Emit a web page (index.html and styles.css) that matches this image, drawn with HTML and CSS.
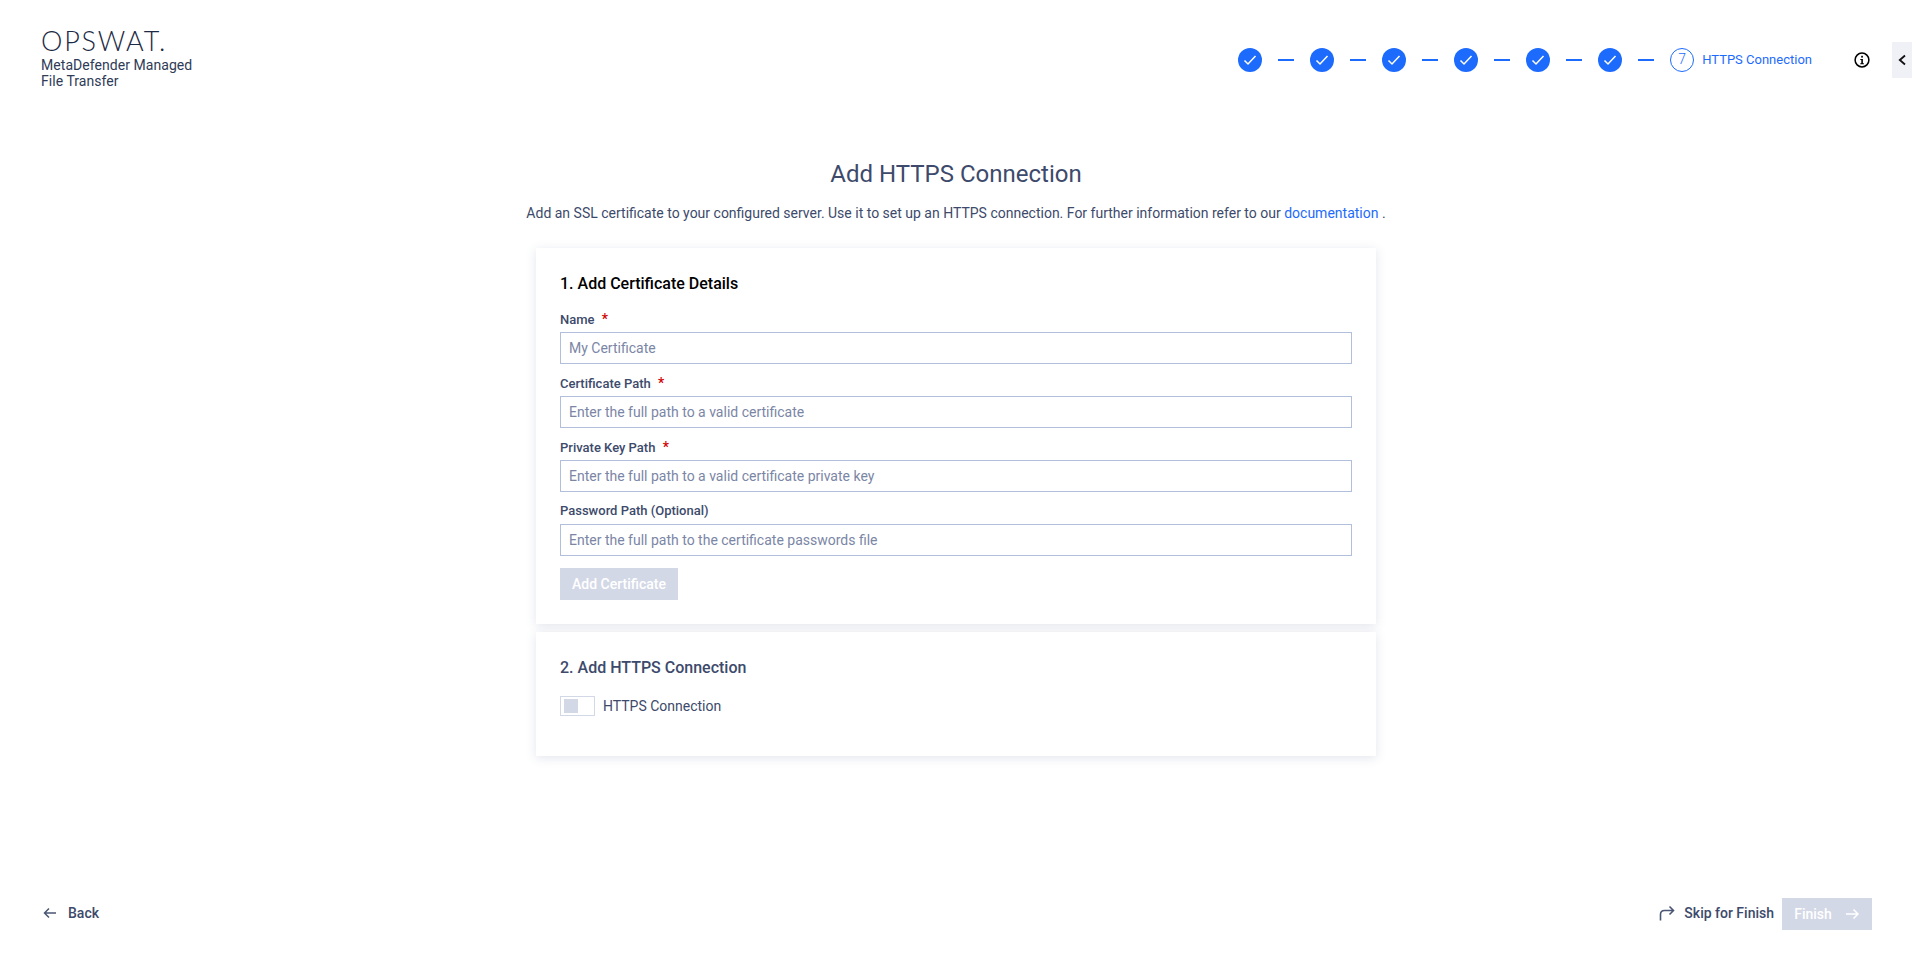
FILE: index.html
```html
<!DOCTYPE html>
<html lang="en">
<head>
    <meta charset="UTF-8">
    <title>MetaDefender Managed File Transfer</title>
    <link rel="stylesheet" href="styles.css">
</head>
<body>
    <div class="page">
        <header class="topbar">
            <div class="brand">
                <div class="brand-logo">OPSWAT.</div>
                <div class="brand-name">MetaDefender Managed<br>File Transfer</div>
            </div>
            <div class="top-right">
                <div class="stepper">
                    <span class="step-done"><svg viewBox="0 0 24 24" width="24" height="24"><path d="M6.500 12.500l3.500 3.500 7.500-8" fill="none" stroke="#fff" stroke-width="1.5"/></svg></span>
                    <span class="step-line"></span>
                    <span class="step-done"><svg viewBox="0 0 24 24" width="24" height="24"><path d="M6.500 12.500l3.500 3.500 7.500-8" fill="none" stroke="#fff" stroke-width="1.5"/></svg></span>
                    <span class="step-line"></span>
                    <span class="step-done"><svg viewBox="0 0 24 24" width="24" height="24"><path d="M6.500 12.500l3.500 3.500 7.500-8" fill="none" stroke="#fff" stroke-width="1.5"/></svg></span>
                    <span class="step-line"></span>
                    <span class="step-done"><svg viewBox="0 0 24 24" width="24" height="24"><path d="M6.500 12.500l3.500 3.500 7.500-8" fill="none" stroke="#fff" stroke-width="1.5"/></svg></span>
                    <span class="step-line"></span>
                    <span class="step-done"><svg viewBox="0 0 24 24" width="24" height="24"><path d="M6.500 12.500l3.500 3.500 7.500-8" fill="none" stroke="#fff" stroke-width="1.5"/></svg></span>
                    <span class="step-line"></span>
                    <span class="step-done"><svg viewBox="0 0 24 24" width="24" height="24"><path d="M6.500 12.500l3.500 3.500 7.500-8" fill="none" stroke="#fff" stroke-width="1.5"/></svg></span>
                    <span class="step-line"></span>
                    <span class="step-current">7</span>
                    <span class="step-label">HTTPS Connection</span>
                </div>
                <svg class="info-icon" viewBox="0 0 16 16" width="16" height="16">
                    <circle cx="8" cy="8" r="6.900" fill="none" stroke="#000" stroke-width="1.500"/>
                    <rect x="7.200" y="3.800" width="1.700" height="1.800" fill="#000"/>
                    <path d="M6.300 7h2.600v4.200h1v1.100H6.300v-1.100h1V8.100h-1z" fill="#000"/>
                </svg>
                <div class="collapse-tab">
                    <svg viewBox="0 0 20 36" width="20" height="36"><path d="M13 13.500L7.800 18l5.200 4.500" fill="none" stroke="#111" stroke-width="1.800"/></svg>
                </div>
            </div>
        </header>

        <main class="content">
            <h1>Add HTTPS Connection</h1>
            <p class="intro">Add an SSL certificate to your configured server. Use it to set up an HTTPS connection. For further information refer to our <a href="#">documentation</a> .</p>

            <section class="card">
                <h2 class="card-title-dark">1. Add Certificate Details</h2>
                <label class="field-label">Name <span class="req">*</span></label>
                <input class="field" type="text" placeholder="My Certificate">
                <label class="field-label">Certificate Path <span class="req">*</span></label>
                <input class="field" type="text" placeholder="Enter the full path to a valid certificate">
                <label class="field-label">Private Key Path <span class="req">*</span></label>
                <input class="field" type="text" placeholder="Enter the full path to a valid certificate private key">
                <label class="field-label">Password Path (Optional)</label>
                <input class="field" type="text" placeholder="Enter the full path to the certificate passwords file">
                <button class="btn-disabled add-btn" type="button">Add Certificate</button>
            </section>

            <section class="card card-second">
                <h2>2. Add HTTPS Connection</h2>
                <div class="toggle-row">
                    <span class="toggle"><span class="toggle-knob"></span></span>
                    <span class="toggle-text">HTTPS Connection</span>
                </div>
            </section>
        </main>

        <footer class="bottombar">
            <a class="nav-link" href="#">
                <svg viewBox="0 0 16 16" width="16" height="16"><path d="M14 8H2.500M7 3.500L2.500 8 7 12.500" fill="none" stroke="#4a5674" stroke-width="1.500"/></svg>
                <span class="back-text">Back</span>
            </a>
            <div class="bottom-right">
                <a class="nav-link" href="#">
                    <svg viewBox="0 0 16 16" width="16" height="16"><path d="M1.500 15.500V9.500C1.500 7 3 5.500 5.500 5.500H14.500M10.500 1.500l4 4-4 4" fill="none" stroke="#4a5674" stroke-width="1.600"/></svg>
                    <span class="skip-text">Skip for Finish</span>
                </a>
                <button class="btn-disabled finish-btn" type="button">Finish
                    <svg viewBox="0 0 16 16" width="16" height="16"><path d="M2 8h12M9.500 3.500L14 8l-4.500 4.500" fill="none" stroke="#fff" stroke-width="1.500"/></svg>
                </button>
            </div>
        </footer>
    </div>
</body>
</html>
```

FILE: styles.css
```css
body {
    margin: 0;
    font-family: 'Roboto', sans-serif;
    font-size: 14px;
    color: #3d4a6b;
    background-color: #ffffff;
}
.page {
    height: 962px;
    display: flex;
    flex-direction: column;
    overflow: hidden;
}

/* top bar */
.topbar {
    display: flex;
    justify-content: space-between;
    align-items: flex-start;
    height: 98px;
    padding-left: 41px;
    flex-shrink: 0;
}
.brand {
    padding-top: 27px;
}
.brand-logo {
    font-family: 'Lato', sans-serif;
    font-weight: 300;
    font-size: 27px;
    line-height: 28px;
    letter-spacing: 1.8px;
    color: #1d2a44;
    height: 30px;
}
.brand-name {
    font-size: 14px;
    line-height: 16px;
    letter-spacing: 0.05px;
    color: #2f3b57;
}
.top-right {
    display: flex;
    align-items: center;
    padding-top: 42px;
}
.stepper {
    display: flex;
    align-items: center;
    gap: 16px;
}
.step-done {
    width: 24px;
    height: 24px;
    border-radius: 50%;
    background-color: #1d6bfc;
    display: block;
}
.step-done svg {
    display: block;
}
.step-line {
    width: 16px;
    height: 2px;
    background-color: #1d6bfc;
}
.step-current {
    width: 24px;
    height: 24px;
    box-sizing: border-box;
    border: 1px solid #1d6bfc;
    border-radius: 50%;
    color: #1d6bfc;
    font-size: 14px;
    font-weight: 300;
    line-height: 21px;
    text-align: center;
}
.step-label {
    margin-left: -8px;
    font-size: 13px;
    line-height: 14px;
    color: #1d6bfc;
}
.info-icon {
    margin-left: 42px;
    display: block;
}
.collapse-tab {
    margin-left: 22px;
    width: 20px;
    height: 36px;
    background-color: #f0f1f6;
}
.collapse-tab svg {
    display: block;
}

/* main content */
.content {
    display: flex;
    flex-direction: column;
    align-items: center;
}
h1 {
    margin: 62px 0 0;
    font-size: 24px;
    font-weight: 400;
    line-height: 28px;
    color: #3d4a6b;
}
.intro {
    margin: 15px 0 0;
    line-height: 20px;
    color: #3d4a6b;
}
.intro a {
    color: #1d6bfc;
    text-decoration: none;
}
.card {
    width: 840px;
    box-sizing: border-box;
    margin-top: 25px;
    padding: 26px 24px 24px;
    height: 376px;
    background-color: #ffffff;
    box-shadow: 0 2px 10px rgba(70, 80, 130, 0.15);
}
.card-second {
    margin-top: 8px;
    height: 124px;
}
h2 {
    margin: 0;
    font-size: 16px;
    font-weight: 500;
    line-height: 20px;
    color: #3d4a6b;
}
h2.card-title-dark {
    color: #000000;
    margin-bottom: 18px;
}
.field-label {
    display: block;
    font-size: 13px;
    font-weight: 500;
    line-height: 14px;
    height: 20px;
    color: #3d4a6b;
}
.req {
    color: #d00000;
    margin-left: 4px;
    font-size: 14px;
}
.field {
    display: block;
    width: 100%;
    height: 32px;
    box-sizing: border-box;
    margin-bottom: 12px;
    padding: 0 8px 1px;
    border: 1px solid #b2bfdc;
    border-radius: 0;
    outline: none;
    font-family: 'Roboto', sans-serif;
    font-size: 14px;
    color: #3d4a6b;
}
.field::placeholder {
    color: #7b86a5;
    opacity: 1;
}
.btn-disabled {
    height: 32px;
    border: none;
    background-color: #d3d8e6;
    color: #ffffff;
    font-family: 'Roboto', sans-serif;
    font-size: 14px;
    font-weight: 500;
}
.add-btn {
    display: block;
    width: 118px;
    padding: 0 0 1px;
}
.toggle-row {
    display: flex;
    align-items: center;
    gap: 8px;
    margin-top: 18px;
}
.toggle {
    display: block;
    width: 35px;
    height: 20px;
    box-sizing: border-box;
    border: 1px solid #d3d8e6;
    padding: 2px 3px;
}
.toggle-knob {
    display: block;
    width: 14px;
    height: 14px;
    background-color: #d3d8e6;
}
.toggle-text {
    line-height: 20px;
    height: 20px;
    margin-top: -1px;
}

/* bottom bar */
.bottombar {
    margin-top: auto;
    height: 64px;
    display: flex;
    justify-content: space-between;
    align-items: flex-start;
    padding: 0 40px 0 42px;
    flex-shrink: 0;
}
.nav-link {
    display: flex;
    align-items: center;
    height: 30px;
    color: #3d4a6b;
    font-weight: 500;
    text-decoration: none;
}
.back-text {
    margin-left: 10px;
}
.skip-text {
    margin-left: 9px;
}
.bottom-right {
    display: flex;
    align-items: flex-start;
    gap: 8px;
}
.finish-btn {
    display: flex;
    align-items: center;
    justify-content: center;
    gap: 12px;
    width: 90px;
    padding: 0;
}
```
